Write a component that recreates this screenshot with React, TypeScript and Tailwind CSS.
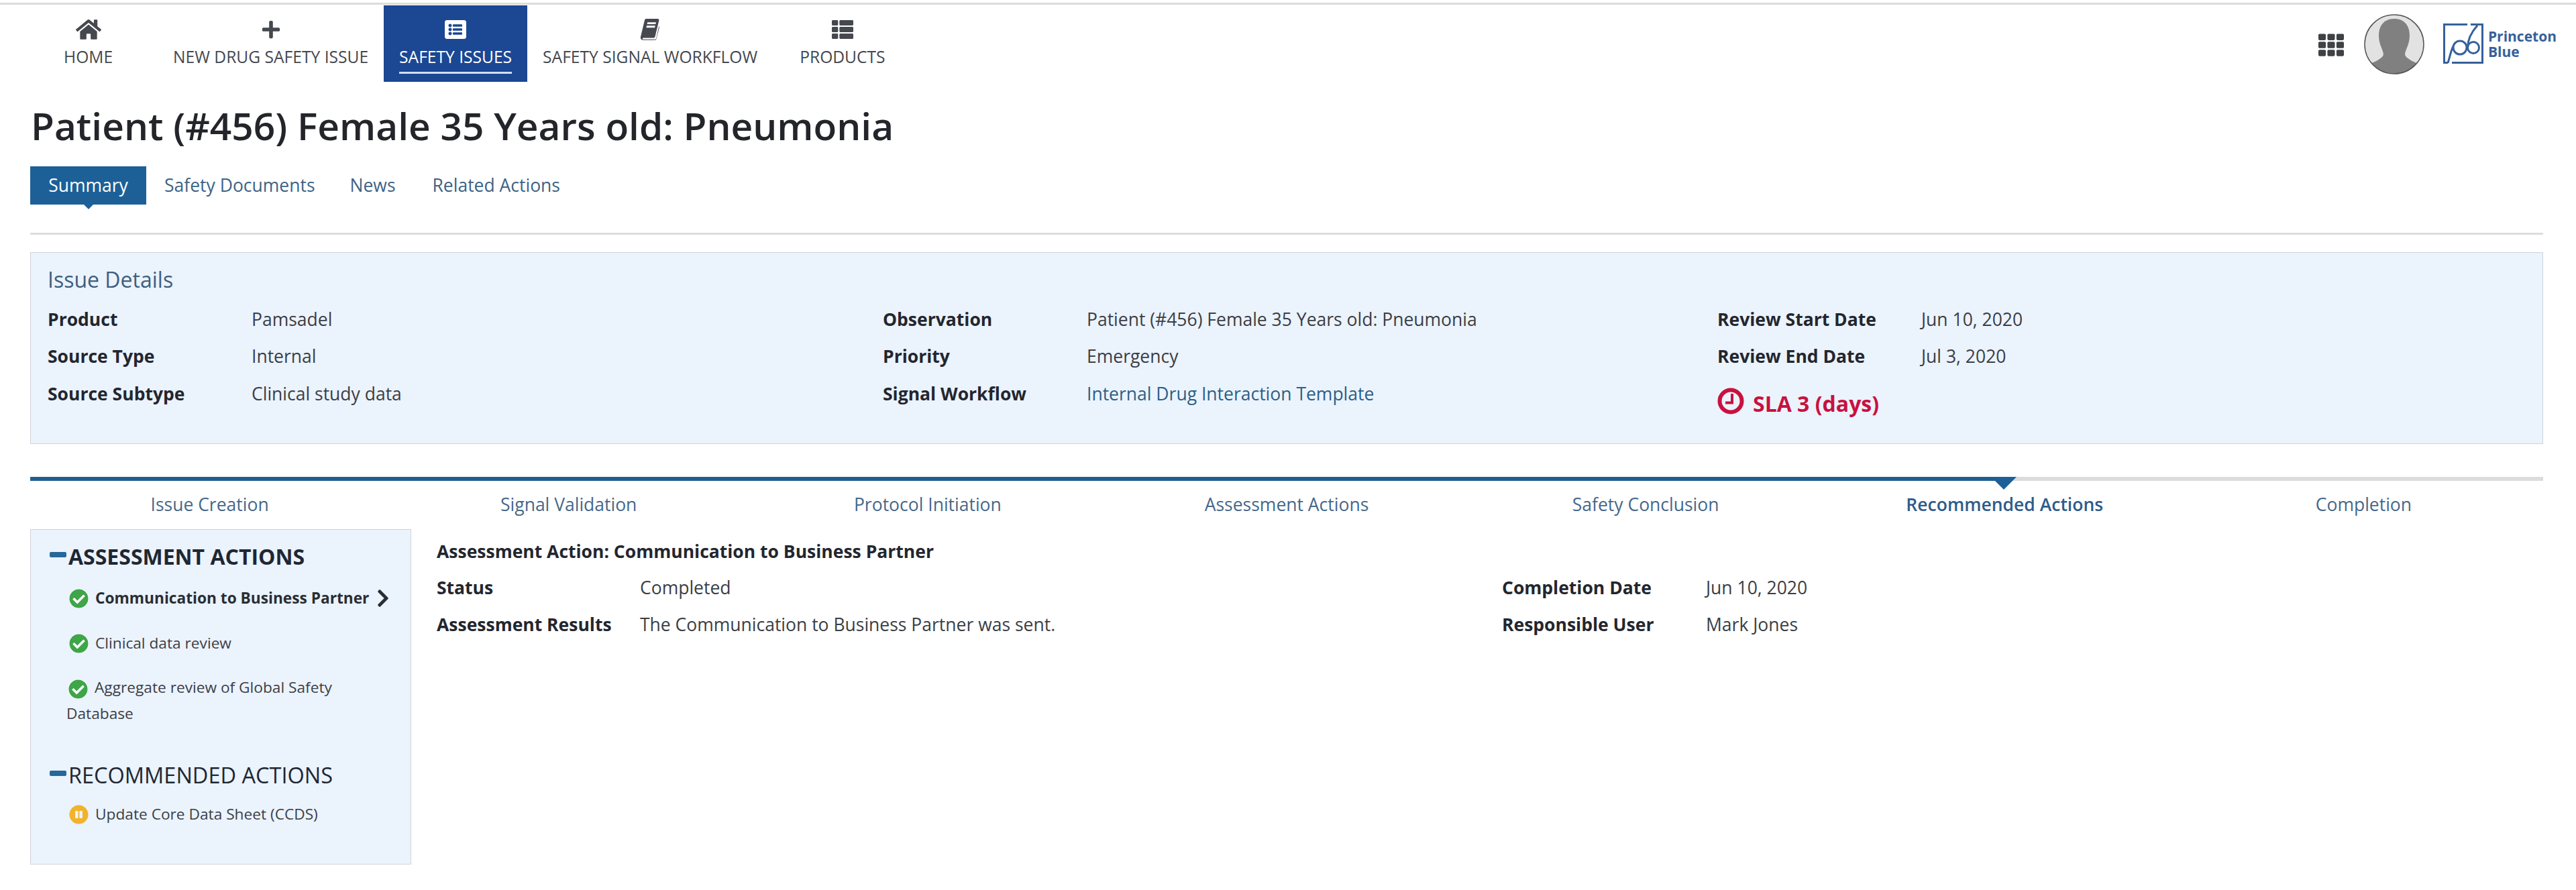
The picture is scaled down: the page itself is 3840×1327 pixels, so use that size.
import { FaCheckCircle, FaChevronRight, FaHome, FaListAlt, FaPauseCircle, FaPlus, FaTh, FaThList } from 'react-icons/fa'
import type { ReactNode } from 'react'

const BookIcon = ({ className }: { className?: string }) => (
  <svg viewBox="0 0 30 36" className={className} fill="currentColor">
    <path d="M9 1h18c1.500 0 2.500 1.200 2.100 2.600L23 29c-.4 1.500-1.500 2.200-3 2.200H5c-1.500 0-2.200.8-1.900 1.500.3.700 1 1 2.200 1h17.200c1.200 0 1.900-.6 2.200-1.700l4.300-19c.5.400.8 1 .6 1.900l-4.600 17.800c-.3 1.300-1.400 2-2.700 2H4.500C2 35 0 33.400 0 30.800c0-.5.100-1 .2-1.400L6.500 3.200C6.900 1.800 7.700 1 9 1z" />
    <path d="M11 6.500h13.500l-.7 3H10.300zM9.700 12h13.500l-.7 3H9z" fill="#fff" />
  </svg>
)

const ClockIcon = ({ className }: { className?: string }) => (
  <svg viewBox="0 0 40 40" className={className} fill="none" stroke="currentColor">
    <circle cx="20" cy="20" r="16.500" strokeWidth="6" />
    <path d="M22 9v13.500H12" strokeWidth="4" />
  </svg>
)

const navItems = [
  { label: 'HOME', icon: <FaHome className="w-[38px] h-[34px]" />, cls: 'ml-[72px] mr-[44px]' },
  { label: 'NEW DRUG SAFETY ISSUE', icon: <FaPlus className="w-[32px] h-[30px]" /> },
  { label: 'SAFETY ISSUES', icon: <FaListAlt className="w-[36px] h-[32px]" />, active: true },
  { label: 'SAFETY SIGNAL WORKFLOW', icon: <BookIcon className="w-[34px] h-[34px]" />, cls: 'mr-[17px]' },
  { label: 'PRODUCTS', icon: <FaThList className="w-[40px] h-[32px]" /> },
]

const detailCols = [
  [
    ['Product', 'Pamsadel'],
    ['Source Type', 'Internal'],
    ['Source Subtype', 'Clinical study data'],
  ],
  [
    ['Observation', 'Patient (#456) Female 35 Years old: Pneumonia'],
    ['Priority', 'Emergency'],
    ['Signal Workflow', 'Internal Drug Interaction Template'],
  ],
  [
    ['Review Start Date', 'Jun 10, 2020'],
    ['Review End Date', 'Jul 3, 2020'],
  ],
]

const steps = ['Issue Creation', 'Signal Validation', 'Protocol Initiation', 'Assessment Actions', 'Safety Conclusion', 'Recommended Actions', 'Completion']

const Row = ({ label, children, link }: { label: string; children: ReactNode; link?: boolean }) => (
  <div className="flex items-center h-[55.500px] text-[26.500px]">
    <div className="w-[304px] font-bold text-[#23262e]">{label}</div>
    <div className={link ? 'text-[#2c5f86]' : 'text-[#3b3e45]'}>{children}</div>
  </div>
)

const Check = () => <FaCheckCircle className="inline-block w-[29px] h-[29px] text-[#3ea548] align-middle mr-[10px] bg-white rounded-full" />

const GroupTitle = ({ children, bold }: { children: ReactNode; bold?: boolean }) => (
  <div className={`flex items-center h-[40px] text-[#1f2733] ${bold ? 'font-bold text-[32px]' : 'text-[32.500px]'}`}>
    <span className="w-[25px] h-[8px] bg-[#27679a] rounded-[2px] mr-[3px] -mt-[6px]" />
    {children}
  </div>
)

export default function App() {
  return (
    <div className="min-h-[1327px] bg-white font-['Open_Sans',sans-serif]">
      <div className="pt-[4px]">
        <div className="h-[3px] bg-[#dcdcdc]" />
      </div>

      <header className="flex justify-between h-[114px] mt-[1px]">
        <nav className="flex">
          {navItems.map((item) => (
            <div
              key={item.label}
              className={`flex flex-col items-center px-[23px] ${item.active ? 'bg-[#1b4793] text-white' : 'text-[#45484e]'} ${item.cls ?? ''}`}
            >
              <div className="h-[36px] mt-[18px] flex items-center">{item.icon}</div>
              <div className="text-[24.600px] leading-[32px] mt-[7px] whitespace-nowrap">{item.label}</div>
              {item.active && <div className="w-full h-[3px] bg-[#cfe0f5] mt-[6px]" />}
            </div>
          ))}
        </nav>

        <div className="flex items-start pr-[29px]">
          <FaTh className="w-[42px] h-[38px] mt-[40px] mr-[28px] text-[#3e4145]" />
          <svg viewBox="0 0 90 90" className="w-[90px] h-[90px] mt-[13px] mr-[28px]">
            <defs>
              <clipPath id="avatar-clip">
                <circle cx="45" cy="45" r="44" />
              </clipPath>
            </defs>
            <circle cx="45" cy="45" r="44" fill="#e2e2e2" />
            <path
              clipPath="url(#avatar-clip)"
              fill="#808080"
              d="M45 7C60 7 68 17 68 32C68 45 62 52 61 60C62 66 72 70 84 76V92H6V76C18 70 28 66 29 60C28 52 22 45 22 32C22 17 30 7 45 7Z"
            />
            <circle cx="45" cy="45" r="44" fill="none" stroke="#555" strokeWidth="1.500" />
          </svg>
          <svg viewBox="0 0 60 60" className="w-[60px] h-[60px] mt-[27px] mr-[7px]" fill="none" stroke="#36619b" strokeWidth="3">
            <path d="M7 58.500H1.500V1.500H36M41 1.500H58.500V58.500H13" />
            <path d="M7 59C10 50 11 42 15 34" />
            <circle cx="25" cy="36" r="10" />
            <circle cx="45" cy="36" r="8.500" />
            <path d="M36.500 36C36.500 24 42 13 51 3" />
          </svg>
          <div className="mt-[35px] text-[21px] leading-[23px] font-bold text-[#36619b]">
            Princeton
            <br />
            Blue
          </div>
        </div>
      </header>

      <main className="pl-[45px] pr-[49px]">
        <h1 className="text-[56.800px] leading-[70px] font-semibold text-[#23252a] mt-[30px] ml-[1px]">Patient (#456) Female 35 Years old: Pneumonia</h1>

        <div className="flex items-center h-[57px] mt-[26px] text-[26.500px] text-[#3d6385]">
          <div className="relative h-full w-[173px] bg-[#1d6098] text-white flex items-center justify-center">
            Summary
            <span className="absolute left-1/2 -bottom-[7px] -ml-[7px] border-x-[7px] border-x-transparent border-t-[7px] border-t-[#1d6098]" />
          </div>
          <span className="ml-[27px]">Safety Documents</span>
          <span className="ml-[52px]">News</span>
          <span className="ml-[55px]">Related Actions</span>
        </div>

        <div className="h-[3px] bg-[#dedede] mt-[42px]" />

        <section className="h-[286px] mt-[26px] bg-[#ebf3fd] border border-[#cfd3d8] pl-[25px] pt-[20px]">
          <div className="text-[32px] leading-[40px] text-[#3f5f7f]">Issue Details</div>
          <div className="grid grid-cols-[1245px_1244px_1fr] mt-[12px]">
            {detailCols.map((col, i) => (
              <div key={i}>
                {col.map(([label, value]) => (
                  <Row key={label} label={label} link={label === 'Signal Workflow'}>
                    {value}
                  </Row>
                ))}
                {i === 2 && (
                  <div className="flex items-center mt-[18px] text-[32px] font-bold text-[#c8113f]">
                    <ClockIcon className="w-[40px] h-[40px] mr-[13px] -mt-[8px]" />
                    SLA 3 (days)
                  </div>
                )}
              </div>
            ))}
          </div>
        </section>

        <div className="relative h-[6px] mt-[49px] bg-[#dcdcdc]">
          <div className="h-full w-[2942px] bg-[#1f5f90]" />
          <span className="absolute left-[2923px] top-[0px] border-x-[19px] border-x-transparent border-t-[19px] border-t-[#1d6098]" />
        </div>

        <div className="grid grid-cols-7 mt-[17px] text-[26.500px] leading-[36px] text-[#46688a] text-center">
          {steps.map((s) => (
            <div key={s} className={s === 'Recommended Actions' ? 'font-semibold text-[#2d5c8c]' : ''}>
              {s}
            </div>
          ))}
        </div>

        <div className="flex mt-[19px]">
          <aside className="w-[568px] h-[500px] shrink-0 bg-[#ebf3fd] border border-[#cfd3d8] pl-[28px] pt-[20px]">
            <GroupTitle bold>ASSESSMENT ACTIONS</GroupTitle>

            <div className="flex items-center mt-[25px] ml-[29px] text-[22.700px] font-bold text-[#2a2d33] whitespace-nowrap">
              <Check />
              Communication to Business Partner
              <FaChevronRight className="w-[26px] h-[30px] ml-[8px] text-[#2a2d33]" />
            </div>
            <div className="flex items-center mt-[33px] ml-[29px] text-[22.700px] text-[#3b3e45]">
              <Check />
              Clinical data review
            </div>
            <div className="mt-[29px] ml-[25px] text-[22.700px] leading-[39px] text-[#3b3e45]">
              <span className="ml-[3px]">
                <Check />
              </span>
              Aggregate review of Global Safety
              <br />
              Database
            </div>

            <div className="mt-[53px]">
              <GroupTitle>RECOMMENDED ACTIONS</GroupTitle>
            </div>
            <div className="flex items-center mt-[21px] ml-[29px] text-[22.700px] text-[#3b3e45]">
              <FaPauseCircle className="w-[29px] h-[29px] text-[#f1b32b] mr-[10px]" />
              Update Core Data Sheet (CCDS)
            </div>
          </aside>

          <div className="flex-1 ml-[38px] pt-[11px] text-[26.500px]">
            <div className="font-bold text-[#23262e] leading-[44px]">Assessment Action: Communication to Business Partner</div>
            <div className="grid grid-cols-[1588px_1fr] mt-[5px]">
              <div>
                <div className="flex items-center h-[55px]">
                  <div className="w-[303px] font-bold text-[#23262e]">Status</div>
                  <div className="text-[#3b3e45]">Completed</div>
                </div>
                <div className="flex items-center h-[55px]">
                  <div className="w-[303px] font-bold text-[#23262e]">Assessment Results</div>
                  <div className="text-[#3b3e45]">The Communication to Business Partner was sent.</div>
                </div>
              </div>
              <div>
                <div className="flex items-center h-[55px]">
                  <div className="w-[304px] font-bold text-[#23262e]">Completion Date</div>
                  <div className="text-[#3b3e45]">Jun 10, 2020</div>
                </div>
                <div className="flex items-center h-[55px]">
                  <div className="w-[304px] font-bold text-[#23262e]">Responsible User</div>
                  <div className="text-[#3b3e45]">Mark Jones</div>
                </div>
              </div>
            </div>
          </div>
        </div>
      </main>
    </div>
  )
}
